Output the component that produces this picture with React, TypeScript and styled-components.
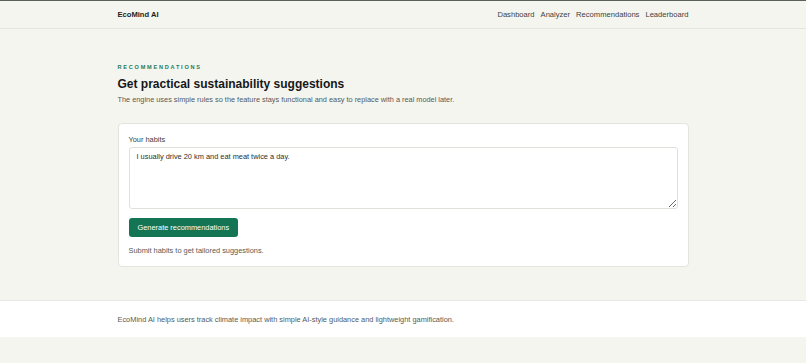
import React from 'react';
import styled, {createGlobalStyle} from 'styled-components'

const GlobalStyles = createGlobalStyle`
html, body {
  margin: 0;
  padding: 0;
  background: #f5f5f0;
  font-family: "Liberation Sans", Arial, sans-serif;
  color: #1c1f1d;
}
* { box-sizing: border-box; }
`

const Page = styled.div`
  min-height: 363px;
  border-top: 1px solid #5b625c;
  display: flex;
  flex-direction: column;
`

const Header = styled.header`
  height: 28px;
  border-bottom: 1px solid #e4e5df;
`

const Wrap = styled.div`
  width: 571px;
  margin: 0 auto;
`

const HeaderInner = styled(Wrap)`
  height: 100%;
  display: flex;
  align-items: center;
  justify-content: space-between;
`

const Brand = styled.div`
  font-weight: 700;
  font-size: 7.6px;
  color: #1c1f1d;
`

const Nav = styled.nav`
  display: flex;
  gap: 6px;
`

const NavLink = styled.a`
  font-size: 7.6px;
  color: #3d423f;
  text-decoration: none;
`

const Main = styled(Wrap)`
  padding: 34px 0 33px;
`

const Eyebrow = styled.div`
  font-size: 5.6px;
  font-weight: 700;
  letter-spacing: 1.75px;
  color: #1f7a55;
  text-transform: uppercase;
  line-height: 8px;
`

const Title = styled.h1`
  margin: 5px 0 0;
  font-size: 12px;
  line-height: 16px;
  font-weight: 700;
  color: #15181a;
`

const Lead = styled.p`
  margin: 2px 0 0;
  font-size: 7.35px;
  line-height: 12px;
  color: #545a57;
`

const Card = styled.section`
  margin-top: 17px;
  background: #fff;
  border: 1px solid #e3e4de;
  border-radius: 4px;
  padding: 11px 10px 10px;
  display: flex;
  flex-direction: column;
`

const Label = styled.label`
  font-size: 7.4px;
  color: #3a3f3c;
  line-height: 10px;
`

const HabitsInput = styled.textarea`
  margin-top: 2px;
  height: 62px;
  border: 1px solid #dfe1db;
  border-radius: 3px;
  padding: 4px 7px;
  font-family: inherit;
  font-size: 7.4px;
  color: #2b302d;
  resize: vertical;
  outline: none;
`

const Button = styled.button`
  align-self: flex-start;
  margin-top: 9px;
  height: 19px;
  padding: 0 9px;
  background: #137553;
  color: #fff;
  border: none;
  border-radius: 3px;
  font-family: inherit;
  font-size: 7.4px;
`

const Hint = styled.p`
  margin: 9px 0 0;
  font-size: 7.4px;
  line-height: 10px;
  color: #545a57;
`

const Footer = styled.footer`
  background: #fff;
  border-top: 1px solid #e8e9e3;
  height: 37px;
  display: flex;
  align-items: center;
`

const FooterText = styled(Wrap)`
  font-size: 7.4px;
  color: #545a57;
`

export default function App() {
  return (
    <>
      <GlobalStyles />
      <Page>
        <Header>
          <HeaderInner>
            <Brand>EcoMind AI</Brand>
            <Nav>
              <NavLink href="#">Dashboard</NavLink>
              <NavLink href="#">Analyzer</NavLink>
              <NavLink href="#">Recommendations</NavLink>
              <NavLink href="#">Leaderboard</NavLink>
            </Nav>
          </HeaderInner>
        </Header>
        <Main>
          <Eyebrow>Recommendations</Eyebrow>
          <Title>Get practical sustainability suggestions</Title>
          <Lead>The engine uses simple rules so the feature stays functional and easy to replace with a real model later.</Lead>
          <Card>
            <Label>Your habits</Label>
            <HabitsInput defaultValue="I usually drive 20 km and eat meat twice a day." />
            <Button>Generate recommendations</Button>
            <Hint>Submit habits to get tailored suggestions.</Hint>
          </Card>
        </Main>
        <Footer>
          <FooterText>EcoMind AI helps users track climate impact with simple AI-style guidance and lightweight gamification.</FooterText>
        </Footer>
      </Page>
    </>
  );
}
